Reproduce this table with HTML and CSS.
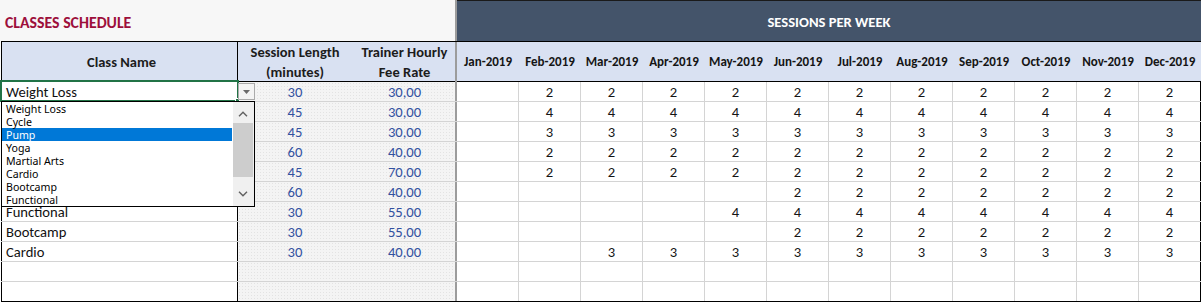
FILE: index.html
```html
<!DOCTYPE html>
<html>
<head>
<meta charset="utf-8">
<link rel="stylesheet" href="styles.css">
</head>
<body>
<div class="sheet">
  <div class="topbar">
    <div class="title-cell"><span class="title">CLASSES SCHEDULE</span></div>
    <div class="banner">SESSIONS PER WEEK</div>
  </div>
  <div class="table">
    <div class="row head">
      <div class="c name">Class Name</div>
      <div class="c len">Session Length<br>(minutes)</div>
      <div class="c fee">Trainer Hourly<br>Fee Rate</div>
      <div class="c m">Jan-2019</div><div class="c m">Feb-2019</div><div class="c m">Mar-2019</div><div class="c m">Apr-2019</div><div class="c m">May-2019</div><div class="c m">Jun-2019</div><div class="c m">Jul-2019</div><div class="c m">Aug-2019</div><div class="c m">Sep-2019</div><div class="c m">Oct-2019</div><div class="c m">Nov-2019</div><div class="c m">Dec-2019</div>
    </div>
    <div class="row">
      <div class="c name">Weight Loss</div><div class="c len">30</div><div class="c fee">30,00</div>
      <div class="c m"></div><div class="c m">2</div><div class="c m">2</div><div class="c m">2</div><div class="c m">2</div><div class="c m">2</div><div class="c m">2</div><div class="c m">2</div><div class="c m">2</div><div class="c m">2</div><div class="c m">2</div><div class="c m">2</div>
    </div>
    <div class="row">
      <div class="c name"></div><div class="c len">45</div><div class="c fee">30,00</div>
      <div class="c m"></div><div class="c m">4</div><div class="c m">4</div><div class="c m">4</div><div class="c m">4</div><div class="c m">4</div><div class="c m">4</div><div class="c m">4</div><div class="c m">4</div><div class="c m">4</div><div class="c m">4</div><div class="c m">4</div>
    </div>
    <div class="row">
      <div class="c name"></div><div class="c len">45</div><div class="c fee">30,00</div>
      <div class="c m"></div><div class="c m">3</div><div class="c m">3</div><div class="c m">3</div><div class="c m">3</div><div class="c m">3</div><div class="c m">3</div><div class="c m">3</div><div class="c m">3</div><div class="c m">3</div><div class="c m">3</div><div class="c m">3</div>
    </div>
    <div class="row">
      <div class="c name"></div><div class="c len">60</div><div class="c fee">40,00</div>
      <div class="c m"></div><div class="c m">2</div><div class="c m">2</div><div class="c m">2</div><div class="c m">2</div><div class="c m">2</div><div class="c m">2</div><div class="c m">2</div><div class="c m">2</div><div class="c m">2</div><div class="c m">2</div><div class="c m">2</div>
    </div>
    <div class="row">
      <div class="c name"></div><div class="c len">45</div><div class="c fee">70,00</div>
      <div class="c m"></div><div class="c m">2</div><div class="c m">2</div><div class="c m">2</div><div class="c m">2</div><div class="c m">2</div><div class="c m">2</div><div class="c m">2</div><div class="c m">2</div><div class="c m">2</div><div class="c m">2</div><div class="c m">2</div>
    </div>
    <div class="row">
      <div class="c name"></div><div class="c len">60</div><div class="c fee">40,00</div>
      <div class="c m"></div><div class="c m"></div><div class="c m"></div><div class="c m"></div><div class="c m"></div><div class="c m">2</div><div class="c m">2</div><div class="c m">2</div><div class="c m">2</div><div class="c m">2</div><div class="c m">2</div><div class="c m">2</div>
    </div>
    <div class="row">
      <div class="c name low">Functional</div><div class="c len">30</div><div class="c fee">55,00</div>
      <div class="c m"></div><div class="c m"></div><div class="c m"></div><div class="c m"></div><div class="c m">4</div><div class="c m">4</div><div class="c m">4</div><div class="c m">4</div><div class="c m">4</div><div class="c m">4</div><div class="c m">4</div><div class="c m">4</div>
    </div>
    <div class="row">
      <div class="c name">Bootcamp</div><div class="c len">30</div><div class="c fee">55,00</div>
      <div class="c m"></div><div class="c m"></div><div class="c m"></div><div class="c m"></div><div class="c m"></div><div class="c m">2</div><div class="c m">2</div><div class="c m">2</div><div class="c m">2</div><div class="c m">2</div><div class="c m">2</div><div class="c m">2</div>
    </div>
    <div class="row">
      <div class="c name">Cardio</div><div class="c len">30</div><div class="c fee">40,00</div>
      <div class="c m"></div><div class="c m"></div><div class="c m">3</div><div class="c m">3</div><div class="c m">3</div><div class="c m">3</div><div class="c m">3</div><div class="c m">3</div><div class="c m">3</div><div class="c m">3</div><div class="c m">3</div><div class="c m">3</div>
    </div>
    <div class="row">
      <div class="c name"></div><div class="c len"></div><div class="c fee"></div>
      <div class="c m"></div><div class="c m"></div><div class="c m"></div><div class="c m"></div><div class="c m"></div><div class="c m"></div><div class="c m"></div><div class="c m"></div><div class="c m"></div><div class="c m"></div><div class="c m"></div><div class="c m"></div>
    </div>
    <div class="row last">
      <div class="c name"></div><div class="c len"></div><div class="c fee"></div>
      <div class="c m"></div><div class="c m"></div><div class="c m"></div><div class="c m"></div><div class="c m"></div><div class="c m"></div><div class="c m"></div><div class="c m"></div><div class="c m"></div><div class="c m"></div><div class="c m"></div><div class="c m"></div>
    </div>
  </div>

  <div class="active-cell"></div>
  <div class="handle"></div>
  <div class="dd-btn">
    <svg width="7" height="4" viewBox="0 0 7 4"><path d="M0 0H7L3.5 4Z" fill="#6b6b6b"/></svg>
  </div>

  <div class="dropdown">
    <div class="dd-list">
      <div class="dd-item">Weight Loss</div>
      <div class="dd-item">Cycle</div>
      <div class="dd-item sel">Pump</div>
      <div class="dd-item">Yoga</div>
      <div class="dd-item">Martial Arts</div>
      <div class="dd-item">Cardio</div>
      <div class="dd-item">Bootcamp</div>
      <div class="dd-item">Functional</div>
    </div>
    <div class="dd-scroll">
      <svg class="chev up" width="10" height="6" viewBox="0 0 10 6"><path d="M1 5.2L5 1.2L9 5.2" fill="none" stroke="#606060" stroke-width="1.4"/></svg>
      <div class="thumb"></div>
      <svg class="chev down" width="10" height="6" viewBox="0 0 10 6"><path d="M1 0.8L5 4.8L9 0.8" fill="none" stroke="#606060" stroke-width="1.4"/></svg>
    </div>
  </div>
</div>
</body>
</html>
```

FILE: styles.css
```css
* {
  box-sizing: border-box;
  margin: 0;
  padding: 0;
}

body {
  margin: 0;
  background: #ffffff;
  font-family: Carlito, Lato, "Liberation Sans", sans-serif;
  color: #111111;
}

.sheet {
  position: relative;
  width: 1201px;
  height: 303px;
  overflow: hidden;
  background: #ffffff;
}

.topbar {
  display: flex;
  height: 41px;
}

.title-cell {
  width: 457px;
  background: #f7f7f7;
  border-right: 2px solid #9c9c9c;
  display: flex;
  align-items: center;
  padding-left: 5px;
  padding-top: 3px;
}

.title {
  color: #9d0f3b;
  font-weight: 700;
  font-size: 15.8px;
  letter-spacing: 0;
}

.banner {
  flex: 1;
  background: #44546a;
  border-top: 1px solid #1a1a1a;
  color: #ffffff;
  font-weight: 700;
  font-size: 14.6px;
  display: flex;
  align-items: center;
  justify-content: center;
  padding-top: 1px;
}

.table {
  padding-left: 1px;
}

.row {
  display: grid;
  grid-template-columns: 237px 114px 105px repeat(12, 62px);
  height: 20px;
  border-bottom: 1px solid #d4d4d4;
  font-size: 14.6px;
}

.row.last {
  border-bottom: 1px solid #000000;
}

.row.head {
  height: 41px;
  border-top: 1px solid #000000;
  border-bottom: 1px solid #000000;
  background: #d9e1f2;
  font-weight: 700;
  font-size: 14.5px;
  line-height: 20px;
  color: #1c1c1c;
}

.c {
  display: flex;
  align-items: center;
  justify-content: center;
  white-space: nowrap;
}

.name {
  border-left: 1px solid #000000;
  border-right: 1px solid #000000;
  justify-content: flex-start;
  padding-left: 4px;
  background: #ffffff;
}

.name.low {
  padding-top: 1px;
  line-height: 12px;
}

.head .name {
  justify-content: center;
  background: transparent;
}

.len,
.fee {
  color: #3251a0;
  background-color: #f4f4f4;
  background-image: radial-gradient(circle, #e3e3e3 0.6px, transparent 0.9px);
  background-size: 3px 3px;
}

.fee {
  border-right: 2px solid #9c9c9c;
  padding-left: 2px;
}

.head .len,
.head .fee {
  color: #1c1c1c;
  background: transparent;
  text-align: center;
}

.head .fee {
  border-right: 2px solid #9c9c9c;
}

.m {
  border-right: 1px solid #d4d4d4;
  color: #151515;
}

.m:last-child {
  border-right: 1px solid #000000;
}

.head .m {
  border-right: none;
  font-size: 13px;
}

.head .m:last-child {
  border-right: none;
}

.active-cell {
  position: absolute;
  left: 0;
  top: 80px;
  width: 239px;
  height: 22px;
  border: 2px solid #217346;
  z-index: 2;
}

.handle {
  position: absolute;
  left: 235px;
  top: 98px;
  width: 5px;
  height: 5px;
  background: #217346;
  border: 1px solid #ffffff;
  z-index: 3;
}

.dd-btn {
  position: absolute;
  left: 238px;
  top: 83px;
  width: 17px;
  height: 17px;
  border: 1px solid #ababab;
  background: #f4f4f4;
  display: flex;
  align-items: center;
  justify-content: center;
  z-index: 4;
}

.dropdown {
  position: absolute;
  left: 1px;
  top: 101px;
  width: 254px;
  height: 106px;
  border: 1px solid #000000;
  background: #ffffff;
  z-index: 5;
  font-family: "Noto Sans", "Open Sans", sans-serif;
  font-size: 10.6px;
  color: #000000;
}

.dd-list {
  width: 230px;
}

.dd-item {
  height: 13px;
  line-height: 13px;
  padding-top: 1px;
  padding-left: 4px;
  white-space: nowrap;
}

.dd-item.sel {
  background: #0078d7;
  color: #ffffff;
}

.dd-scroll {
  position: absolute;
  right: 0;
  top: 0;
  width: 21px;
  height: 104px;
  background: #f0f0f0;
}

.chev {
  position: absolute;
  left: 5px;
}

.chev.up {
  top: 9px;
}

.chev.down {
  top: 89px;
}

.thumb {
  position: absolute;
  left: 0;
  top: 21px;
  width: 20px;
  height: 54px;
  background: #cdcdcd;
}
```
